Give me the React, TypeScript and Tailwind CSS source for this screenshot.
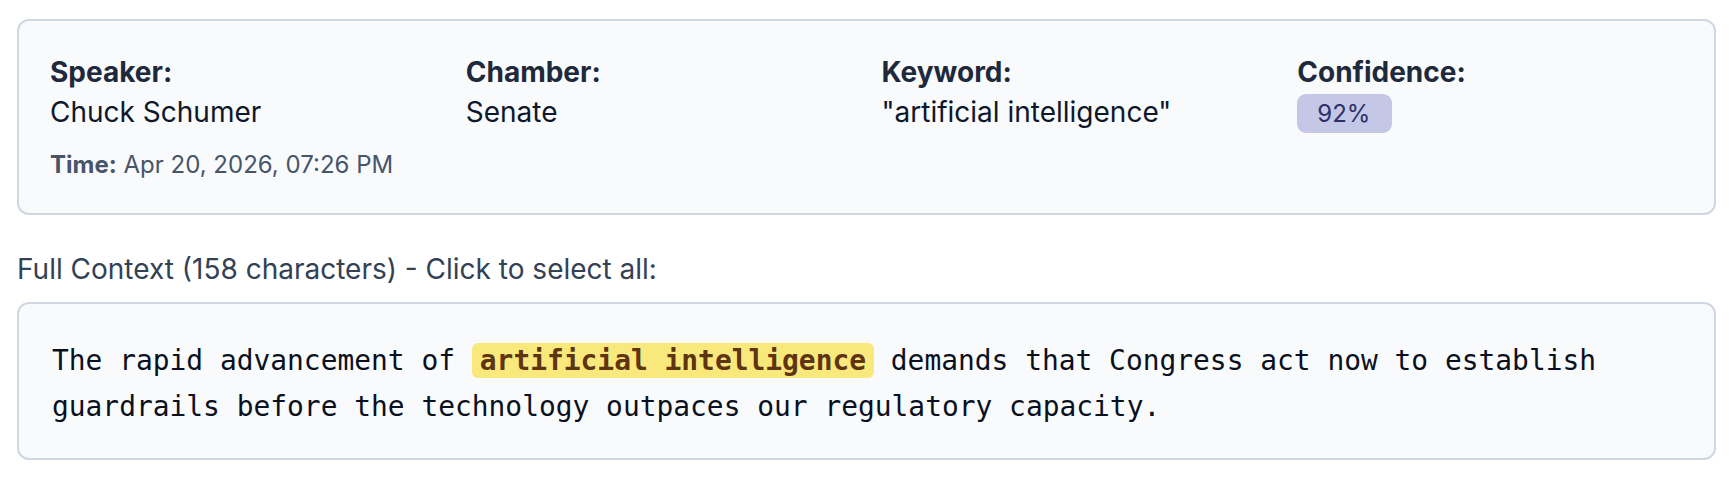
import React from "react";

// summary fields
const FIELDS = [
  { label: "Speaker:", value: "Chuck Schumer" },
  { label: "Chamber:", value: "Senate" },
  { label: "Keyword:", value: '"artificial intelligence"' },
];

export default function App() {
  return (
    <div className="min-h-screen bg-white pl-[17px] pr-4 pt-[19px] font-['Inter',sans-serif]">
      {/* Mention summary */}
      <div className="rounded-[12px] border-2 border-[#cfd7e3] bg-[#f8fafc] px-[31px] py-[31px]">
        <div className="grid grid-cols-4 gap-x-[30px]">
          {FIELDS.map(({ label, value }) => (
            <div key={label}>
              <div className="text-[28px] font-bold leading-[40px] text-[#1e293b]">
                {label}
              </div>
              <div className="text-[28px] leading-[40px] text-[#0f172a]">
                {value}
              </div>
            </div>
          ))}
          <div>
            <div className="text-[28px] font-bold leading-[40px] text-[#1e293b]">
              Confidence:
            </div>
            <div className="pt-[2px]">
              <span className="inline-flex h-[39px] items-center rounded-[9px] bg-[#c5c7e7] pl-[20px] pr-[22px] text-[24px] text-[#2b3168]">
                92%
              </span>
            </div>
          </div>
        </div>
        <div className="mt-[15px] text-[24px] leading-[34px] text-[#475569]">
          <span className="font-bold">Time:</span> Apr 20, 2026, 07:26 PM
        </div>
      </div>

      {/* Context */}
      <div className="mt-[36px] mb-[15px] text-[28px] leading-[36px] text-[#334155]">
        Full Context (158 characters) - Click to select all:
      </div>
      <div className="rounded-[12px] border-2 border-[#cfd7e3] bg-[#f8fafc] pl-[33px] pr-[31px] pt-[34px] pb-[28px] font-['DejaVu_Sans_Mono',monospace] text-[27.9px] leading-[46px] text-[#0b1020]">
        The rapid advancement of{" "}
        <span className="rounded-[6px] bg-[#f9e97c] px-2 py-px font-bold text-[#5e3412]">
          artificial intelligence
        </span>{" "}
        demands that Congress act now to establish guardrails before the
        technology outpaces our regulatory capacity.
      </div>
    </div>
  );
}
